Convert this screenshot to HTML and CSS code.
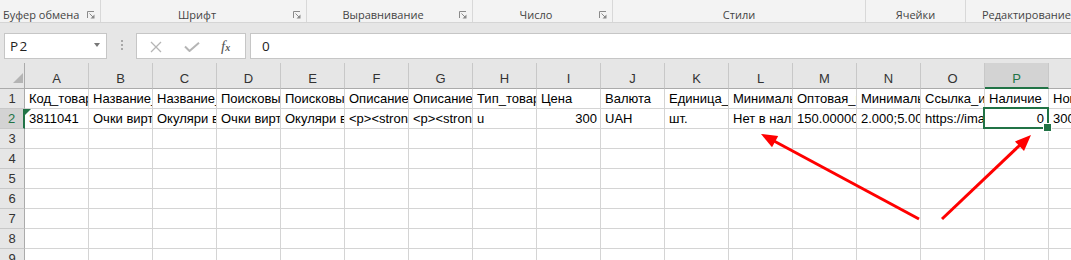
FILE: index.html
```html
<!DOCTYPE html>
<html lang="ru">
<head>
<meta charset="utf-8">
<title>Excel</title>
<link rel="stylesheet" href="styles.css">
</head>
<body>
<div class="app">
  <div class="ribbon">
    <div class="grp g1"><span class="lbl">Буфер обмена</span><svg class="launch" width="8" height="8" viewBox="0 0 8 8"><path d="M0.5 7V0.5H7" fill="none" stroke="#8a8a8a"/><path d="M2.5 2.5L6 6" stroke="#8a8a8a"/><path d="M7.5 3.5V7.5H3.5Z" fill="#8a8a8a"/></svg></div>
    <div class="grp g2"><span class="lbl">Шрифт</span><svg class="launch" width="8" height="8" viewBox="0 0 8 8"><path d="M0.5 7V0.5H7" fill="none" stroke="#8a8a8a"/><path d="M2.5 2.5L6 6" stroke="#8a8a8a"/><path d="M7.5 3.5V7.5H3.5Z" fill="#8a8a8a"/></svg></div>
    <div class="grp g3"><span class="lbl">Выравнивание</span><svg class="launch" width="8" height="8" viewBox="0 0 8 8"><path d="M0.5 7V0.5H7" fill="none" stroke="#8a8a8a"/><path d="M2.5 2.5L6 6" stroke="#8a8a8a"/><path d="M7.5 3.5V7.5H3.5Z" fill="#8a8a8a"/></svg></div>
    <div class="grp g4"><span class="lbl">Число</span><svg class="launch" width="8" height="8" viewBox="0 0 8 8"><path d="M0.5 7V0.5H7" fill="none" stroke="#8a8a8a"/><path d="M2.5 2.5L6 6" stroke="#8a8a8a"/><path d="M7.5 3.5V7.5H3.5Z" fill="#8a8a8a"/></svg></div>
    <div class="grp g5"><span class="lbl">Стили</span></div>
    <div class="grp g6"><span class="lbl">Ячейки</span></div>
    <div class="grp g7"><span class="lbl">Редактирование</span></div>
  </div>

  <div class="fbar">
    <div class="namebox"><span class="nbtext">P2</span><span class="dd"></span></div>
    <div class="dots"><i></i><i></i><i></i></div>
    <div class="fbtns">
      <svg class="bx" width="12" height="12" viewBox="0 0 12 12"><path d="M1 1L11 11M11 1L1 11" stroke="#b5b5b5" stroke-width="1.3"/></svg>
      <svg class="bok" width="16" height="10" viewBox="0 0 16 10"><path d="M1 4.5L5.5 9L15 0.8" fill="none" stroke="#b5b5b5" stroke-width="2"/></svg>
      <span class="fx">f<span class="fxs">x</span></span>
    </div>
    <div class="finput">0</div>
  </div>

  <div class="sheet">
    <div class="corner"></div>
    <div class="ch">A</div><div class="ch">B</div><div class="ch">C</div><div class="ch">D</div><div class="ch">E</div><div class="ch">F</div><div class="ch">G</div><div class="ch">H</div><div class="ch">I</div><div class="ch">J</div><div class="ch">K</div><div class="ch">L</div><div class="ch">M</div><div class="ch">N</div><div class="ch">O</div><div class="ch ch-sel">P</div><div class="ch">Q</div>

    <div class="rh">1</div>
    <div class="c">Код_товара</div><div class="c">Название_позиции</div><div class="c">Название_позиции_укр</div><div class="c">Поисковые_запросы</div><div class="c">Поисковые_запросы_укр</div><div class="c">Описание</div><div class="c">Описание_укр</div><div class="c">Тип_товара</div><div class="c">Цена</div><div class="c">Валюта</div><div class="c">Единица_измерения</div><div class="c">Минимальный_заказ</div><div class="c">Оптовая_цена</div><div class="c">Минимальный_заказ_опт</div><div class="c">Ссылка_изображения</div><div class="c">Наличие</div><div class="c">Номер_группы</div>

    <div class="rh rh-sel">2</div>
    <div class="c err">3811041</div><div class="c">Очки виртуальной реальности</div><div class="c">Окуляри віртуальної реальності</div><div class="c">Очки виртуальной</div><div class="c">Окуляри віртуальної</div><div class="c">&lt;p&gt;&lt;strong&gt;</div><div class="c">&lt;p&gt;&lt;strong&gt;</div><div class="c">u</div><div class="c num">300</div><div class="c">UAH</div><div class="c">шт.</div><div class="c">Нет в наличии</div><div class="c">150.000000</div><div class="c">2.000;5.000</div><div class="c">https://images</div><div class="c num sel">0</div><div class="c">3000000</div>

    <div class="rh">3</div>
    <div class="c"></div><div class="c"></div><div class="c"></div><div class="c"></div><div class="c"></div><div class="c"></div><div class="c"></div><div class="c"></div><div class="c"></div><div class="c"></div><div class="c"></div><div class="c"></div><div class="c"></div><div class="c"></div><div class="c"></div><div class="c"></div><div class="c"></div>
    <div class="rh">4</div>
    <div class="c"></div><div class="c"></div><div class="c"></div><div class="c"></div><div class="c"></div><div class="c"></div><div class="c"></div><div class="c"></div><div class="c"></div><div class="c"></div><div class="c"></div><div class="c"></div><div class="c"></div><div class="c"></div><div class="c"></div><div class="c"></div><div class="c"></div>
    <div class="rh">5</div>
    <div class="c"></div><div class="c"></div><div class="c"></div><div class="c"></div><div class="c"></div><div class="c"></div><div class="c"></div><div class="c"></div><div class="c"></div><div class="c"></div><div class="c"></div><div class="c"></div><div class="c"></div><div class="c"></div><div class="c"></div><div class="c"></div><div class="c"></div>
    <div class="rh">6</div>
    <div class="c"></div><div class="c"></div><div class="c"></div><div class="c"></div><div class="c"></div><div class="c"></div><div class="c"></div><div class="c"></div><div class="c"></div><div class="c"></div><div class="c"></div><div class="c"></div><div class="c"></div><div class="c"></div><div class="c"></div><div class="c"></div><div class="c"></div>
    <div class="rh">7</div>
    <div class="c"></div><div class="c"></div><div class="c"></div><div class="c"></div><div class="c"></div><div class="c"></div><div class="c"></div><div class="c"></div><div class="c"></div><div class="c"></div><div class="c"></div><div class="c"></div><div class="c"></div><div class="c"></div><div class="c"></div><div class="c"></div><div class="c"></div>
    <div class="rh">8</div>
    <div class="c"></div><div class="c"></div><div class="c"></div><div class="c"></div><div class="c"></div><div class="c"></div><div class="c"></div><div class="c"></div><div class="c"></div><div class="c"></div><div class="c"></div><div class="c"></div><div class="c"></div><div class="c"></div><div class="c"></div><div class="c"></div><div class="c"></div>
    <div class="rh">9</div>
    <div class="c"></div><div class="c"></div><div class="c"></div><div class="c"></div><div class="c"></div><div class="c"></div><div class="c"></div><div class="c"></div><div class="c"></div><div class="c"></div><div class="c"></div><div class="c"></div><div class="c"></div><div class="c"></div><div class="c"></div><div class="c"></div><div class="c"></div>
  </div>

  <svg class="arrows" width="1071" height="260" viewBox="0 0 1071 260">
    <line x1="919" y1="219" x2="774" y2="141" stroke="#f00" stroke-width="3"/>
    <polygon points="761,134 778.2,136 772,147.2" fill="#f00"/>
    <line x1="942" y1="219" x2="1020" y2="145" stroke="#f00" stroke-width="3"/>
    <polygon points="1031,135 1024,151 1015,141.5" fill="#f00"/>
  </svg>
</div>
</body>
</html>
```

FILE: styles.css
```css
* { box-sizing: border-box; }
html, body { margin: 0; padding: 0; }
body { width: 1071px; height: 260px; overflow: hidden; background: #fff; }
.app { position: relative; width: 1071px; height: 260px; overflow: hidden; }

/* ribbon group labels */
.ribbon {
  display: flex;
  height: 23px;
  background: #f3f3f3;
  border-bottom: 1px solid #d5d5d5;
  font-family: "Open Sans", "Noto Sans", sans-serif;
  font-size: 11px;
  color: #444;
}
.grp {
  position: relative;
  display: flex;
  align-items: center;
  height: 22px;
  padding-top: 7px;
  border-right: 1px solid #d8d8d8;
  flex: none;
}
.grp .lbl { flex: 1; text-align: center; white-space: nowrap; }
.grp .launch { flex: none; margin-right: 5px; }
.g1 { width: 101px; }
.g1 .lbl { text-align: left; padding-left: 3px; }
.g2 { width: 206px; }
.g3 { width: 166px; }
.g4 { width: 140px; }
.g5 { width: 253px; }
.g6 { width: 100px; }
.g7 { width: 200px; border-right: none; }
.g7 .lbl { text-align: left; padding-left: 16px; }

/* formula bar */
.fbar {
  display: flex;
  align-items: flex-start;
  height: 40px;
  padding-top: 10px;
  background: #e6e6e6;
}
.namebox {
  display: flex;
  align-items: center;
  justify-content: space-between;
  width: 103px;
  height: 26px;
  margin-left: 4px;
  padding: 0 6px 0 5px;
  background: #fff;
  border: 1px solid #c6c6c6;
  font-family: "Open Sans", sans-serif;
  font-size: 13.5px;
  color: #222;
}
.nbtext { letter-spacing: 1.5px; }
.dd {
  width: 0; height: 0;
  border-left: 3.5px solid transparent;
  border-right: 3.5px solid transparent;
  border-top: 4px solid #777;
  margin-top: -2px;
}
.dots {
  display: flex;
  flex-direction: column;
  gap: 2px;
  margin: 7px 13px 0 14px;
}
.dots i { display: block; width: 2px; height: 2px; background: #a8a8a8; }
.fbtns {
  display: flex;
  align-items: center;
  width: 110px;
  height: 26px;
  background: #fff;
  border: 1px solid #c6c6c6;
  padding-left: 13px;
}
.bx { margin-top: 1px; }
.bok { margin-left: 22px; margin-top: 1px; }
.fx {
  margin-left: 21px;
  font-family: "Liberation Serif", serif;
  font-style: italic;
  font-size: 15px;
  color: #555;
}
.fxs { font-size: 10px; font-weight: bold; }
.finput {
  flex: 1;
  height: 26px;
  margin-left: 4px;
  margin-right: -10px;
  padding-left: 11px;
  background: #fff;
  border: 1px solid #c6c6c6;
  font-family: "Open Sans", sans-serif;
  font-size: 13.5px;
  line-height: 24px;
  color: #222;
}

/* sheet grid */
.sheet {
  display: grid;
  grid-template-columns: 25px repeat(17, 64px);
  grid-template-rows: 26px;
  grid-auto-rows: 20px;
  font-family: "Liberation Sans", Arial, sans-serif;
  font-size: 13px;
  color: #000;
}
.corner {
  position: relative;
  background: #e6e6e6;
  border-right: 1px solid #ababab;
  border-bottom: 1px solid #ababab;
}
.corner::after {
  content: "";
  position: absolute;
  right: 1px;
  bottom: 5px;
  width: 0; height: 0;
  border-left: 10px solid transparent;
  border-bottom: 10px solid #b4b4b4;
}
.ch {
  background: #e6e6e6;
  border-right: 1px solid #c8c8c8;
  border-bottom: 1px solid #ababab;
  text-align: center;
  padding-top: 7px;
  line-height: 18px;
  color: #333;
}
.ch-sel {
  background: #d3d3d3;
  color: #217346;
  border-bottom: 2px solid #217346;
}
.rh {
  background: #e6e6e6;
  border-right: 1px solid #ababab;
  border-bottom: 1px solid #c8c8c8;
  text-align: center;
  padding-top: 1px;
  line-height: 18px;
  color: #333;
}
.rh-sel {
  background: #d3d3d3;
  color: #217346;
  border-right: 2px solid #217346;
}
.c {
  position: relative;
  border-right: 1px solid #d4d4d4;
  border-bottom: 1px solid #d4d4d4;
  padding: 1px 3px 0 4px;
  line-height: 18px;
  white-space: nowrap;
  overflow: hidden;
}
.c.num { text-align: right; }
.c.sel { overflow: visible; padding-right: 4px; }
.c.sel::after {
  content: "";
  position: absolute;
  left: -2px; top: -2px; right: -1px; bottom: -1px;
  border: 2px solid #217346;
}
.c.sel::before {
  content: "";
  position: absolute;
  right: -4px; bottom: -4px;
  width: 7px; height: 7px;
  background: #217346;
  border: 1px solid #fff;
  z-index: 2;
}
.c.err::before {
  content: "";
  position: absolute;
  left: 0; top: 0;
  width: 0; height: 0;
  border-top: 6px solid #217346;
  border-right: 6px solid transparent;
}

.arrows { position: absolute; left: 0; top: 0; pointer-events: none; }
```
